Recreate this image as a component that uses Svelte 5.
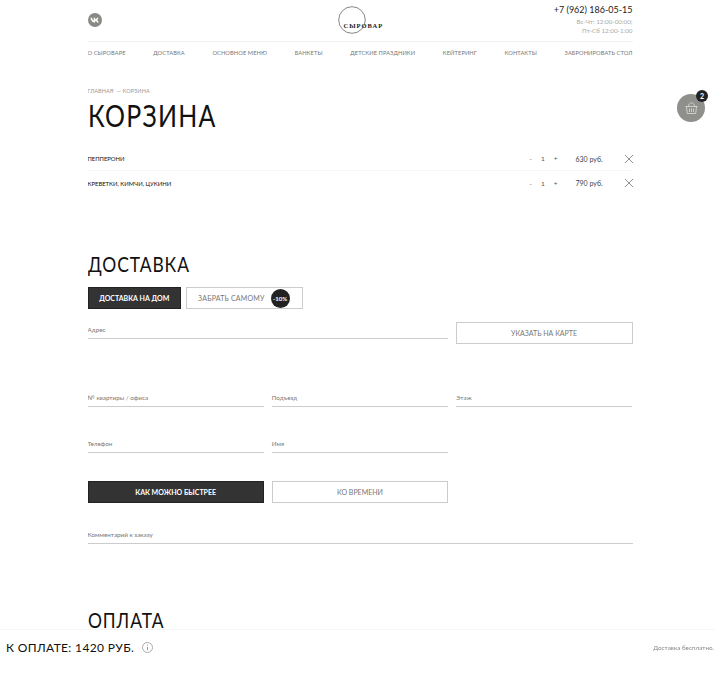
<script>
  const nav = ['О сыроваре', 'Доставка', 'Основное меню', 'Банкеты', 'Детские праздники', 'Кейтеринг', 'Контакты', 'Забронировать стол'];
  const items = [
    { name: 'Пепперони', qty: 1, price: 630 },
    { name: 'Креветки, кимчи, цукини', qty: 1, price: 790 }
  ];
</script>

<div class="page">
  <header class="top">
    <a class="vk" href="#vk" aria-label="VK">
      <svg width="9" height="6" viewBox="0 0 18 11"><path d="M1 1h3c.5 3 2 5 3.500 5.500V1h3v3.500C12 4.200 13.500 2.500 14 1h3c-.5 2-2 4-3.200 4.700C15 6.300 16.500 8 17.500 10.500h-3.300C13.500 8.700 12 7.300 10.500 7v3.500H9.500C5 10.500 1.500 6.500 1 1z" fill="#fff"/></svg>
    </a>
    <div class="logo">
      <svg width="30" height="30" viewBox="0 0 30 30"><circle cx="14" cy="15" r="13.300" fill="none" stroke="#555" stroke-width="0.700"/></svg>
      <span>Сыровар</span>
    </div>
    <div class="contacts">
      <div class="phone">+7 (962) 186-05-15</div>
      <div class="hours">Вс-Чт: 12:00-00:00;<br />Пт-Сб 12:00-1:00</div>
    </div>
  </header>

  <nav class="menu">
    {#each nav as link}
      <a href="#nav">{link}</a>
    {/each}
  </nav>

  <div class="crumbs">Главная &nbsp;— Корзина</div>
  <h1>Корзина</h1>

  <ul class="cart">
    {#each items as item}
      <li>
        <span class="name">{item.name}</span>
        <span class="qty"><i>-</i><b>{item.qty}</b><i>+</i></span>
        <span class="price">{item.price} руб.</span>
        <svg class="remove" width="8" height="8" viewBox="0 0 8 8"><path d="M0 0l8 8M8 0L0 8" stroke="#444" stroke-width="0.600"/></svg>
      </li>
    {/each}
  </ul>

  <h2 class="delivery">Доставка</h2>
  <div class="tabs">
    <button class="btn dark home">Доставка на дом</button>
    <button class="btn self">Забрать самому <span class="off">-10%</span></button>
  </div>

  <div class="address">
    <div class="field">Адрес</div>
    <button class="btn">Указать на карте</button>
  </div>

  <div class="grid flat">
    <div class="field">№ квартиры / офиса</div>
    <div class="field">Подъезд</div>
    <div class="field">Этаж</div>
  </div>

  <div class="grid contact">
    <div class="field">Телефон</div>
    <div class="field">Имя</div>
  </div>

  <div class="grid when">
    <button class="btn dark">Как можно быстрее</button>
    <button class="btn">Ко времени</button>
  </div>

  <div class="field comment">Комментарий к заказу</div>

  <h2 class="payment">Оплата</h2>
</div>

<a class="basket" href="#cart" aria-label="Корзина">
  <svg width="13" height="12" viewBox="0 0 13 12" fill="none" stroke="#ddd" stroke-width="0.800"><path d="M3.500 4.500C3.500 2 5 .8 6.500 .8S9.500 2 9.500 4.500M.5 4.500h12M1.500 4.500l.8 7h8.400l.8-7M4.500 6.500v3.500M6.500 6.500v3.500M8.500 6.500v3.500"/></svg>
  <span class="count">2</span>
</a>

<footer class="total">
  <span class="sum">К оплате: 1420 руб.</span>
  <svg width="11" height="11" viewBox="0 0 11 11"><circle cx="5.500" cy="5.500" r="5" fill="none" stroke="#aaa"/><path d="M5.500 2.500v1M5.500 4.800v3.500" stroke="#999"/></svg>
  <span class="free">Доставка бесплатно.</span>
</footer>

<style>
  :global(body) {
    margin: 0;
    background: #fff;
    font-family: Lato, "Liberation Sans", sans-serif;
    color: #111;
  }

  .page {
    width: 545px;
    margin-left: 87.500px;
    height: 673px;
    overflow: hidden;
  }

  .top {
    display: flex;
    justify-content: space-between;
    align-items: flex-start;
    height: 41px;
    position: relative;
  }

  .vk {
    width: 14px;
    height: 14px;
    margin-top: 13px;
    border-radius: 50%;
    background: #8a8a84;
    display: flex;
    align-items: center;
    justify-content: center;
  }

  .logo {
    position: absolute;
    left: 250px;
    top: 5px;
    width: 46px;
    height: 30px;
  }
  .logo span {
    position: absolute;
    left: 6px;
    top: 17px;
    font: bold 6.500px "Liberation Serif", serif;
    letter-spacing: 1px;
    text-transform: uppercase;
    color: #222;
  }

  .contacts {
    text-align: right;
    margin-top: 4px;
  }
  .phone {
    font-size: 9px;
    line-height: 12px;
    color: #222;
  }
  .hours {
    margin-top: 2px;
    font-size: 6.300px;
    line-height: 8.500px;
    color: #aaa;
  }

  .menu {
    display: flex;
    justify-content: space-between;
    margin: 0 -5px;
    padding: 7px 5px 0;
    border-top: 1px solid #f2f2f2;
    font-size: 5.700px;
    line-height: 8px;
    letter-spacing: 0.100px;
    text-transform: uppercase;
  }
  .menu a {
    color: #777;
    text-decoration: none;
  }

  .crumbs {
    margin-top: 30px;
    font-size: 5.500px;
    line-height: 8px;
    letter-spacing: 0.100px;
    text-transform: uppercase;
    color: #999;
  }

  h1 {
    margin: 2px 0 0;
    font-size: 30px;
    line-height: 36px;
    font-weight: 400;
    letter-spacing: 1.500px;
    text-transform: uppercase;
    color: #111;
    transform: scaleX(0.83);
    transform-origin: left;
  }

  .cart {
    list-style: none;
    margin: 14px 0 0;
    padding: 0;
  }
  .cart li {
    display: flex;
    align-items: center;
    height: 24px;
    font-size: 7px;
    border-bottom: 1px solid #f6f6f6;
    box-sizing: border-box;
  }
  .cart li:last-child {
    border-bottom: 0;
  }
  .name {
    flex: 1;
    font-size: 5.900px;
    text-transform: uppercase;
    color: #111;
  }
  .qty {
    display: flex;
    gap: 9px;
    width: 30px;
    font-size: 6.500px;
    color: #555;
  }
  .qty i {
    font-style: normal;
  }
  .qty b {
    font-weight: 400;
  }
  .price {
    margin-left: 16px;
    width: 28px;
    color: #444;
    white-space: nowrap;
  }
  .remove {
    margin-left: 21px;
  }

  h2 {
    margin: 0;
    font-size: 21px;
    line-height: 24px;
    font-weight: 400;
    letter-spacing: 1.100px;
    text-transform: uppercase;
    color: #111;
    transform: scaleX(0.83);
    transform-origin: left;
  }
  .delivery {
    margin-top: 57px;
  }

  .btn {
    display: flex;
    align-items: center;
    justify-content: center;
    gap: 11px;
    height: 22px;
    padding: 0;
    background: #fff;
    border: 1px solid #ccc;
    font: 400 7px Lato, "Liberation Sans", sans-serif;
    text-transform: uppercase;
    color: #777;
    box-sizing: border-box;
  }
  .btn.dark {
    background: #333;
    border-color: #222;
    color: #fff;
    font-weight: 700;
  }

  .tabs {
    display: flex;
    gap: 5px;
    margin-top: 11px;
  }
  .home {
    width: 93.500px;
  }
  .self {
    width: 117px;
    justify-content: flex-start;
    padding-left: 11px;
    gap: 6px;
    letter-spacing: 0.200px;
  }
  .off {
    display: flex;
    align-items: center;
    justify-content: center;
    width: 19px;
    height: 19px;
    border-radius: 50%;
    background: #222;
    color: #fff;
    font-size: 6px;
    font-weight: 700;
    letter-spacing: 0;
  }

  .field {
    height: 13px;
    border-bottom: 1px solid #ccc;
    font-size: 6.300px;
    line-height: 9px;
    color: #777;
  }

  .address {
    display: grid;
    grid-template-columns: 360px 177px;
    justify-content: space-between;
    align-items: start;
    margin-top: 13px;
  }
  .address .field {
    margin-top: 3px;
  }

  .grid {
    display: grid;
    grid-template-columns: repeat(3, 176.300px);
    gap: 8px;
  }
  .flat {
    margin-top: 49px;
  }
  .contact {
    margin-top: 32px;
  }
  .when {
    margin-top: 28px;
  }
  .comment {
    margin-top: 27px;
  }
  .payment {
    margin-top: 64px;
  }

  .basket {
    position: fixed;
    left: 677px;
    top: 94px;
    width: 28px;
    height: 28px;
    border-radius: 50%;
    background: #8f8f8b;
    display: flex;
    align-items: center;
    justify-content: center;
  }
  .count {
    position: absolute;
    right: -3px;
    top: -4px;
    width: 12px;
    height: 12px;
    border-radius: 50%;
    background: #222;
    color: #fff;
    font-size: 7px;
    font-weight: 700;
    line-height: 12px;
    text-align: center;
  }

  .total {
    position: fixed;
    left: 0;
    right: 0;
    bottom: 0;
    height: 44px;
    display: flex;
    align-items: center;
    gap: 8px;
    padding: 0 1px 8px 6px;
    background: #fff;
    border-top: 1px solid #f6f6f6;
    box-sizing: border-box;
  }
  .sum {
    font-size: 12px;
    letter-spacing: 0.350px;
    text-transform: uppercase;
    color: #111;
  }
  .free {
    margin-left: auto;
    font-size: 6.300px;
    color: #888;
  }
</style>
